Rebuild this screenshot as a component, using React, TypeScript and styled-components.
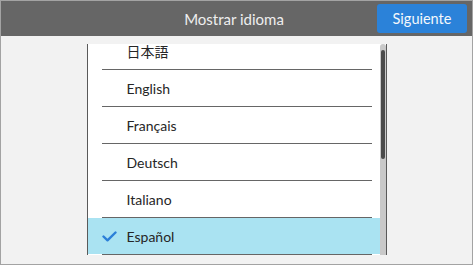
import React from "react";
import styled, { createGlobalStyle } from "styled-components";

const Global = createGlobalStyle`
  html, body { margin: 0; padding: 0; background: #f2f2f2; }
  * { box-sizing: border-box; }
`;

const Window = styled.div`
  width: 473px;
  height: 265px;
  border: 1px solid #a3a3a3;
  background: #f2f2f2;
  display: flex;
  flex-direction: column;
  font-family: Lato, "Noto Sans", sans-serif;
  overflow: hidden;
`;

const Header = styled.header`
  height: 35px;
  flex: none;
  background: #666666;
  display: grid;
  grid-template-columns: 1fr auto 1fr;
  align-items: center;
  padding-right: 5px;
`;

const Title = styled.h1`
  grid-column: 2;
  margin: 0;
  font-size: 15px;
  font-weight: 400;
  color: #eeeeee;
`;

const NextButton = styled.button`
  grid-column: 3;
  justify-self: end;
  width: 90px;
  height: 29px;
  border: none;
  border-radius: 3px;
  background: #2b82d9;
  color: #f4f8fc;
  font-family: Lato, "Noto Sans", sans-serif;
  font-size: 14.5px;
  padding: 0;
`;

const Body = styled.main`
  flex: 1;
  display: flex;
  justify-content: center;
  padding-top: 8px;
`;

const Panel = styled.div`
  width: 300px;
  height: 211px;
  display: flex;
  border-left: 1px solid #5a5a5a;
  border-right: 1px solid #5a5a5a;
  background: #ffffff;
`;

const Viewport = styled.div`
  flex: 1;
  overflow: hidden;
`;

const List = styled.ul`
  list-style: none;
  margin: -11px 0 0 0;
  padding: 0;
`;

const Row = styled.li`
  height: 37px;
  display: flex;
  flex-direction: column;
`;

const RowContent = styled.div<{ $selected?: boolean }>`
  flex: 1;
  display: flex;
  align-items: center;
  padding-left: 14px;
  font-size: 14px;
  color: #262626;
  font-family: Lato, "Noto Sans CJK JP", sans-serif;
  background: ${(p) => (p.$selected ? "#aae3f2" : "transparent")};
`;

const CheckSlot = styled.span`
  width: 25px;
  display: flex;
  align-items: center;
`;

const Separator = styled.div`
  height: 1px;
  margin: 0 8px 0 14px;
  background: #666666;
`;

const Track = styled.div`
  width: 6px;
  flex: none;
  background: #c9c9c9;
  border-radius: 3px 3px 0 0;
  padding: 6px 1px 0 1px;
`;

const Thumb = styled.div`
  height: 109px;
  background: #4b4b4b;
  border-radius: 2px;
`;

const Check = () => (
  <svg width="15" height="11" viewBox="0 0 15 11">
    <path d="M1.5 5.5 L5.5 9.3 L13.5 1.5" fill="none" stroke="#2b7fd8" strokeWidth="2.4" strokeLinecap="round" strokeLinejoin="round" />
  </svg>
);

const languages = ["日本語", "English", "Français", "Deutsch", "Italiano", "Español"];
const selected = "Español";

export default function App() {
  return (
    <>
      <Global />
      <Window>
        <Header>
          <Title>Mostrar idioma</Title>
          <NextButton>Siguiente</NextButton>
        </Header>
        <Body>
          <Panel>
            <Viewport>
              <List>
                {languages.map((l) => (
                  <Row key={l}>
                    <RowContent $selected={l === selected}>
                      <CheckSlot>{l === selected ? <Check /> : null}</CheckSlot>
                      {l}
                    </RowContent>
                    <Separator />
                  </Row>
                ))}
              </List>
            </Viewport>
            <Track>
              <Thumb />
            </Track>
          </Panel>
        </Body>
      </Window>
    </>
  );
}
